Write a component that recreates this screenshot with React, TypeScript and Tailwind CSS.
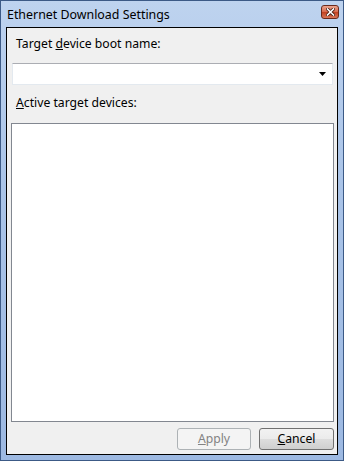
import React from "react";

const font = { fontFamily: '"Noto Sans", "Open Sans", sans-serif' };

function CloseButton() {
  return (
    <div className="w-[18px] h-[14px] rounded-[3px] border border-[#6b2a1c] bg-[linear-gradient(#eba58f,#d8674a_50%,#c1401f_51%,#d9775a)] flex items-center justify-center">
      <svg width="9" height="8" viewBox="0 0 9 8">
        <path d="M1.5 1 L7.5 7 M7.5 1 L1.5 7" stroke="#4a1d12" strokeWidth="3.2" strokeLinecap="square" />
        <path d="M1.5 1 L7.5 7 M7.5 1 L1.5 7" stroke="#ffffff" strokeWidth="1.6" strokeLinecap="square" />
      </svg>
    </div>
  );
}

export default function App() {
  return (
    <div
      className="w-[344px] h-[461px] border border-[#3c5a86] bg-[linear-gradient(180deg,#bed3ef,#aac4e8_40%,#9db9e2)] flex flex-col px-[5px] pb-[5px] text-[12.2px] text-black"
      style={font}
    >
      <div className="h-[26px] flex items-center justify-between pl-[1px] pr-0">
        <span className="text-[12.4px] text-black leading-none mt-[2px]">Ethernet Download Settings</span>
        <div className="mt-[-4px] mr-[-1px]">
          <CloseButton />
        </div>
      </div>
      <div className="flex-1 border border-black bg-[#f0f0f0] flex flex-col">
        <div className="pl-[9px] pt-[8px] leading-[16px] h-[24px]">
          Target <span className="underline">d</span>evice boot name:
        </div>
        <div className="ml-[5px] mt-[11px] w-[321px] h-[22px] bg-white border border-[#e3e9ef] border-t-[#abadb3] flex items-center justify-end pr-[6px]">
          <svg width="7" height="4" viewBox="0 0 7 4">
            <path d="M0 0 H7 L3.5 4 Z" fill="#000" />
          </svg>
        </div>
        <div className="pl-[9px] mt-[10px] leading-[16px] h-[16px]">
          <span className="underline">A</span>ctive target devices:
        </div>
        <div className="ml-[4px] mt-[12px] w-[323px] h-[299px] bg-white border border-[#828790]" />
        <div className="flex justify-end gap-[8px] pr-[3px] mt-[6px]">
          <button className="w-[74px] h-[22px] rounded-[3px] border border-[#adb2b5] bg-[#f4f4f4] text-[#838383] text-[12.2px] leading-none pt-[1px]">
            <span className="underline">A</span>pply
          </button>
          <button className="w-[75px] h-[22px] rounded-[3px] border border-[#707070] bg-[linear-gradient(#f2f2f2,#ebebeb_50%,#dddddd_51%,#cfcfcf)] text-black text-[12.2px] leading-none pt-[1px]">
            <span className="underline">C</span>ancel
          </button>
        </div>
      </div>
    </div>
  );
}
